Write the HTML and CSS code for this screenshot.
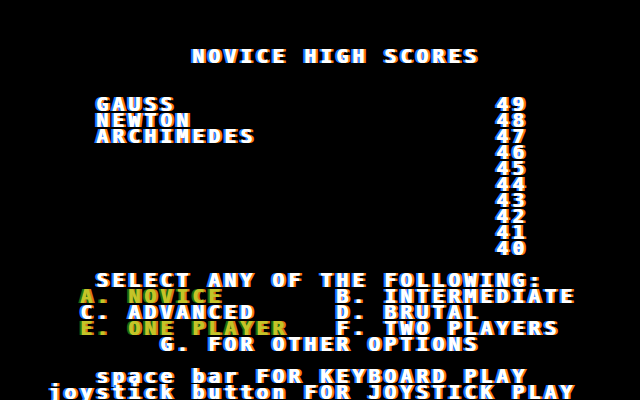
FILE: index.html
```html
<!DOCTYPE html>
<html>
<head>
<meta charset="utf-8">
<link rel="stylesheet" href="styles.css">
</head>
<body>
<pre class="screen">



            NOVICE HIGH SCORES


      GAUSS                    49
      NEWTON                   48
      ARCHIMEDES               47
                               46
                               45
                               44
                               43
                               42
                               41
                               40

      SELECT ANY OF THE FOLLOWING:
     <span class="hl">A. NOVICE</span>       B. INTERMEDIATE
     C. ADVANCED     D. BRUTAL
     <span class="hl">E. ONE PLAYER</span>   F. TWO PLAYERS
          G. FOR OTHER OPTIONS

      space bar FOR KEYBOARD PLAY
   joystick button FOR JOYSTICK PLAY</pre>
</body>
</html>
```
FILE: styles.css
```css
html, body {
  margin: 0;
  padding: 0;
  background: #000;
  width: 640px;
  height: 400px;
  overflow: hidden;
}

.screen {
  margin: 0;
  width: 640px;
  height: 400px;
  font-family: "DejaVu Sans Mono", "Liberation Mono", monospace;
  font-weight: bold;
  font-size: 20px;
  letter-spacing: 3.96px;
  line-height: 16px;
  color: #ffffff;
  text-shadow: 1px 0 #ffffff, -2px 0 #1f7cff, 3px 0 #ff7a10;
}

.hl {
  color: #c4c428;
  text-shadow: 1px 0 #c4c428, -2px 0 #1c6a14, 3px 0 #e07814;
}
```
